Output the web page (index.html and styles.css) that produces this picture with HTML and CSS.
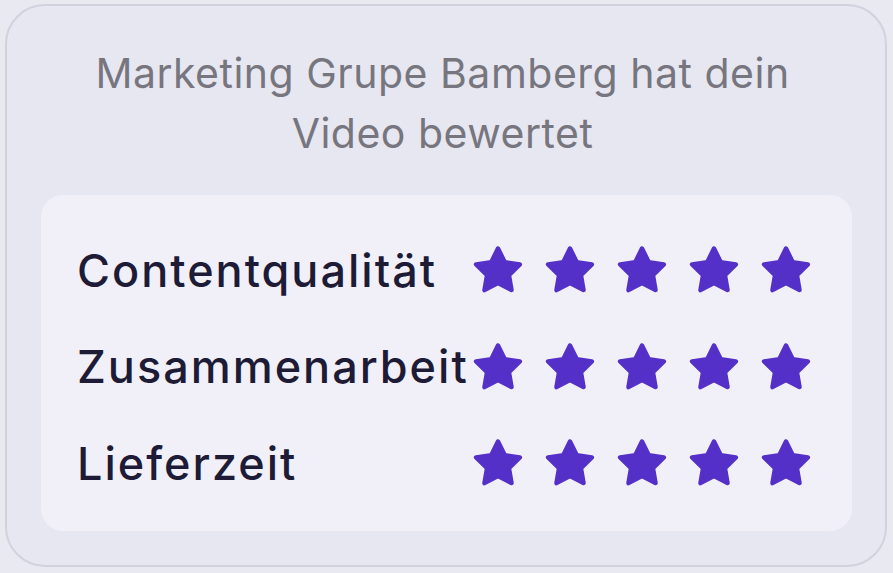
FILE: index.html
```html
<!DOCTYPE html>
<html lang="de">
<head>
<meta charset="utf-8">
<title>Bewertung</title>
<link rel="stylesheet" href="styles.css">
</head>
<body>
<svg width="0" height="0" class="defs" aria-hidden="true">
  <defs>
    <symbol id="star" viewBox="0 0 50 50">
      <polygon points="25,3.5 31.76,17.2 46.88,19.39 35.94,30.05 38.52,45.11 25,38 11.48,45.11 14.06,30.05 3.12,19.39 18.24,17.2" fill="currentColor" stroke="currentColor" stroke-width="4.5" stroke-linejoin="round"/>
    </symbol>
  </defs>
</svg>
<div class="card">
  <p class="title">Marketing Grupe Bamberg hat dein<br>Video bewertet</p>
  <div class="ratings">
    <div class="row">
      <span class="label">Contentqualität</span>
      <div class="stars">
        <svg class="star"><use href="#star"/></svg>
        <svg class="star"><use href="#star"/></svg>
        <svg class="star"><use href="#star"/></svg>
        <svg class="star"><use href="#star"/></svg>
        <svg class="star"><use href="#star"/></svg>
      </div>
    </div>
    <div class="row">
      <span class="label">Zusammenarbeit</span>
      <div class="stars">
        <svg class="star"><use href="#star"/></svg>
        <svg class="star"><use href="#star"/></svg>
        <svg class="star"><use href="#star"/></svg>
        <svg class="star"><use href="#star"/></svg>
        <svg class="star"><use href="#star"/></svg>
      </div>
    </div>
    <div class="row">
      <span class="label">Lieferzeit</span>
      <div class="stars">
        <svg class="star"><use href="#star"/></svg>
        <svg class="star"><use href="#star"/></svg>
        <svg class="star"><use href="#star"/></svg>
        <svg class="star"><use href="#star"/></svg>
        <svg class="star"><use href="#star"/></svg>
      </div>
    </div>
  </div>
</div>
</body>
</html>
```
FILE: styles.css
```css
html, body {
  margin: 0;
  padding: 0;
  background: #e9e9f2;
}
body {
  font-family: Inter, "Noto Sans", sans-serif;
  width: 893px;
  height: 573px;
  overflow: hidden;
}
.defs {
  position: absolute;
  width: 0;
  height: 0;
}
.card {
  box-sizing: border-box;
  margin: 4px 6px 0 5px;
  height: 563px;
  border: 2px solid #d2d2dd;
  border-radius: 40px;
  background: #e7e7f1;
  padding: 0 33px 0 34px;
  display: flex;
  flex-direction: column;
}
.title {
  margin: 37px 0 0 0;
  padding-right: 8px;
  text-align: center;
  color: #77767f;
  font-size: 41px;
  letter-spacing: 0.5px;
  line-height: 60px;
  font-weight: 400;
}
.ratings {
  margin-top: 32px;
  background: #f1f0f8;
  border-radius: 22px;
  padding: 50px 0 43px 36px;
  display: flex;
  flex-direction: column;
  gap: 46.5px;
}
.row {
  display: flex;
  align-items: center;
  height: 50px;
}
.label {
  width: 396px;
  flex: none;
  color: #1d1b35;
  font-size: 45px;
  letter-spacing: 2px;
  font-weight: 500;
  white-space: nowrap;
}
.stars {
  display: flex;
  gap: 22px;
}
.star {
  width: 50px;
  height: 50px;
  color: #5430c8;
}
```
